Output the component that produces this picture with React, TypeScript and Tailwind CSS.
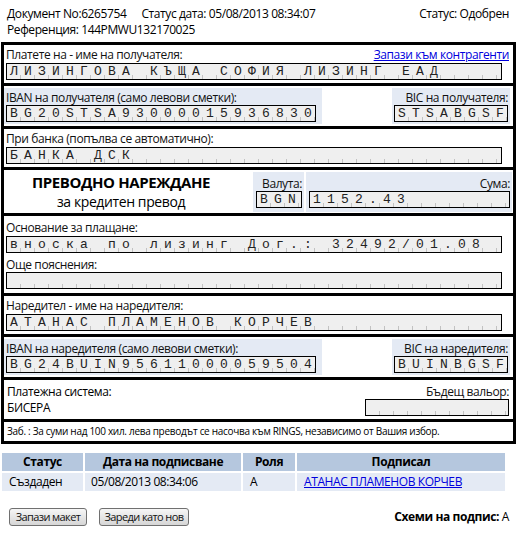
import React from 'react';

const UI_FONT = "font-['Open_Sans','Noto_Sans',sans-serif] tracking-[-0.4px]";

function Field({ value, cells, width }: { value: string; cells: number; width: number }) {
  const chars = value.split('');
  const list = Array.from({ length: cells }, (_, i) => chars[i] ?? '');
  return (
    <div
      className="flex h-[17px] shrink-0 overflow-hidden border border-black bg-[#efefef] font-['Liberation_Mono','Courier_New',monospace] text-[13px] leading-[15px] tracking-normal text-[#222]"
      style={{ width }}
    >
      {list.map((ch, i) => (
        <span key={i} className="relative flex h-full w-[14px] shrink-0 items-center justify-center">
          {ch === ' ' ? '' : ch}
          <span className="absolute bottom-0 right-0 h-[4px] w-px bg-[#c2c2c2]" />
        </span>
      ))}
    </div>
  );
}

function Label({ children, right }: { children: React.ReactNode; right?: boolean }) {
  return (
    <div className={`h-[15px] text-[12px] leading-[15px] text-[#111] ${right ? 'text-right' : ''}`}>{children}</div>
  );
}

export default function App() {
  return (
    <main className={`min-h-screen w-[528px] bg-white text-black ${UI_FONT}`}>
      <div className="w-[516px]">
        <header className="pt-[6px] pl-[7px] pr-[7px] text-[12px] leading-[16px]">
          <div className="flex">
            <span>Документ No:6265754</span>
            <span className="ml-[15px]">Статус дата: 05/08/2013 08:34:07</span>
            <span className="ml-auto">Статус: Одобрен</span>
          </div>
          <div>Референция: 144PMWU132170025</div>
        </header>

        <section className="mt-[4px] ml-px w-[515px] border-[3px] border-black">
          {/* payee */}
          <div className="pl-[2px] pr-[4px] pt-[2px] pb-[3px]">
            <div className="flex h-[15px] items-center justify-between">
              <Label>Платете на - име на получателя:</Label>
              <a href="#" className="text-[12px] leading-[15px] text-[#0000dd] underline">
                Запази към контрагенти
              </a>
            </div>
            <div className="mt-px">
              <Field value="ЛИЗИНГОВА КЪЩА СОФИЯ ЛИЗИНГ ЕАД" cells={36} width={496} />
            </div>
          </div>

          {/* payee IBAN / BIC */}
          <div className="flex justify-between border-t-[3px] border-black pr-[3px] py-[2px]">
            <div className="w-[318px] bg-[#e4eaf4] px-[2px] py-[2px]">
              <Label>IBAN на получателя (само левови сметки):</Label>
              <Field value="BG20STSA93000015936830" cells={22} width={310} />
            </div>
            <div className="flex w-[118px] flex-col items-end bg-[#e4eaf4] px-[2px] py-[2px]">
              <Label right>BIC на получателя:</Label>
              <Field value="STSABGSF" cells={8} width={114} />
            </div>
          </div>

          {/* bank */}
          <div className="border-t-[3px] border-black pl-[2px] pr-[4px] pt-[2px] pb-[3px]">
            <Label>При банка (попълва се автоматично):</Label>
            <div className="mt-px">
              <Field value="БАНКА ДСК" cells={36} width={496} />
            </div>
          </div>

          {/* title / currency / amount */}
          <div className="flex border-t-[3px] border-black pr-[1px] pt-[2px] pb-[1px]">
            <div className="flex w-[234px] flex-col items-center justify-center">
              <div className="text-[15px] font-bold leading-[19px]">ПРЕВОДНО НАРЕЖДАНЕ</div>
              <div className="text-[14px] leading-[19px]">за кредитен превод</div>
            </div>
            <div className="ml-[15px] flex w-[51px] flex-col items-end bg-[#e4eaf4] px-[2px] pt-[4px] pb-[4px]">
              <Label right>Валута:</Label>
              <Field value="BGN" cells={3} width={46} />
            </div>
            <div className="ml-[2px] flex w-[206px] flex-col items-end bg-[#e4eaf4] px-[2px] pt-[4px] pb-[4px]">
              <Label right>Сума:</Label>
              <Field value="1152.43" cells={15} width={201} />
            </div>
          </div>

          {/* reason */}
          <div className="border-t-[3px] border-black pl-[2px] pr-[4px] pt-[4px] pb-[4px]">
            <Label>Основание за плащане:</Label>
            <div className="mt-px">
              <Field value="вноска по лизинг Дог.: 32492/01.08" cells={36} width={496} />
            </div>
            <div className="mt-[4px]">
              <Label>Още пояснения:</Label>
            </div>
            <Field value="" cells={36} width={496} />
          </div>

          {/* orderer */}
          <div className="border-t-[3px] border-black pl-[2px] pr-[4px] pt-[2px] pb-[3px]">
            <Label>Наредител - име на наредителя:</Label>
            <div className="mt-px">
              <Field value="АТАНАС ПЛАМЕНОВ КОРЧЕВ" cells={36} width={496} />
            </div>
          </div>

          {/* orderer IBAN / BIC */}
          <div className="flex justify-between border-t-[3px] border-black pr-[3px] py-[2px]">
            <div className="w-[318px] bg-[#e4eaf4] px-[2px] py-[2px]">
              <Label>IBAN на наредителя (само левови сметки):</Label>
              <Field value="BG24BUIN95611000059504" cells={22} width={310} />
            </div>
            <div className="flex w-[118px] flex-col items-end bg-[#e4eaf4] px-[2px] py-[2px]">
              <Label right>BIC на наредителя:</Label>
              <Field value="BUINBGSF" cells={8} width={114} />
            </div>
          </div>

          {/* payment system */}
          <div className="flex justify-between border-t-[3px] border-black pl-[3px] pr-[4px] pt-[4px] pb-[3px]">
            <div className="text-[12px] leading-[16px]">
              <div>Платежна система:</div>
              <div>БИСЕРА</div>
            </div>
            <div className="flex flex-col items-end">
              <Label right>Бъдещ вальор:</Label>
              <Field value="" cells={11} width={144} />
            </div>
          </div>

          {/* note */}
          <div className="border-t-[3px] border-black px-[3px] py-[3px] text-[10px] leading-[13px] tracking-[-0.3px]">
            Заб. : За суми над 100 хил. лева преводът се насочва към RINGS, независимо от Вашия избор.
          </div>
        </section>

        <table className="mt-[7px] w-[507px] border-separate border-spacing-[2px] text-[12px]">
          <thead>
            <tr className="h-[18px] bg-[#b5c7de] font-bold">
              <th className="w-[81px] p-0 text-center leading-[18px]">Статус</th>
              <th className="w-[156px] p-0 text-center leading-[18px]">Дата на подписване</th>
              <th className="w-[52px] p-0 text-center leading-[18px]">Роля</th>
              <th className="p-0 text-center leading-[18px]">Подписал</th>
            </tr>
          </thead>
          <tbody>
            <tr className="h-[18px] bg-[#e4eaf4]">
              <td className="p-0 pl-[7px] leading-[18px]">Създаден</td>
              <td className="p-0 pl-[6px] leading-[18px]">05/08/2013 08:34:06</td>
              <td className="p-0 pl-[7px] leading-[18px]">А</td>
              <td className="p-0 pl-[7px] leading-[18px]">
                <a href="#" className="text-[#0000dd] underline">
                  АТАНАС ПЛАМЕНОВ КОРЧЕВ
                </a>
              </td>
            </tr>
          </tbody>
        </table>

        <div className="mt-[15px] flex items-center pl-[9px] pr-[7px]">
          <button className="h-[18px] w-[78px] rounded-[3px] border border-[#707070] bg-gradient-to-b from-[#f6f6f6] to-[#d6d6d6] text-[11px] leading-[16px] tracking-[-0.6px] text-[#111]">
            Запази макет
          </button>
          <button className="ml-[12px] h-[18px] w-[90px] rounded-[3px] border border-[#707070] bg-gradient-to-b from-[#f6f6f6] to-[#d6d6d6] text-[11px] leading-[16px] tracking-[-0.6px] text-[#111]">
            Зареди като нов
          </button>
          <div className="ml-auto text-[12px]">
            <span className="font-bold">Схеми на подпис:</span> А
          </div>
        </div>
      </div>
    </main>
  );
}
